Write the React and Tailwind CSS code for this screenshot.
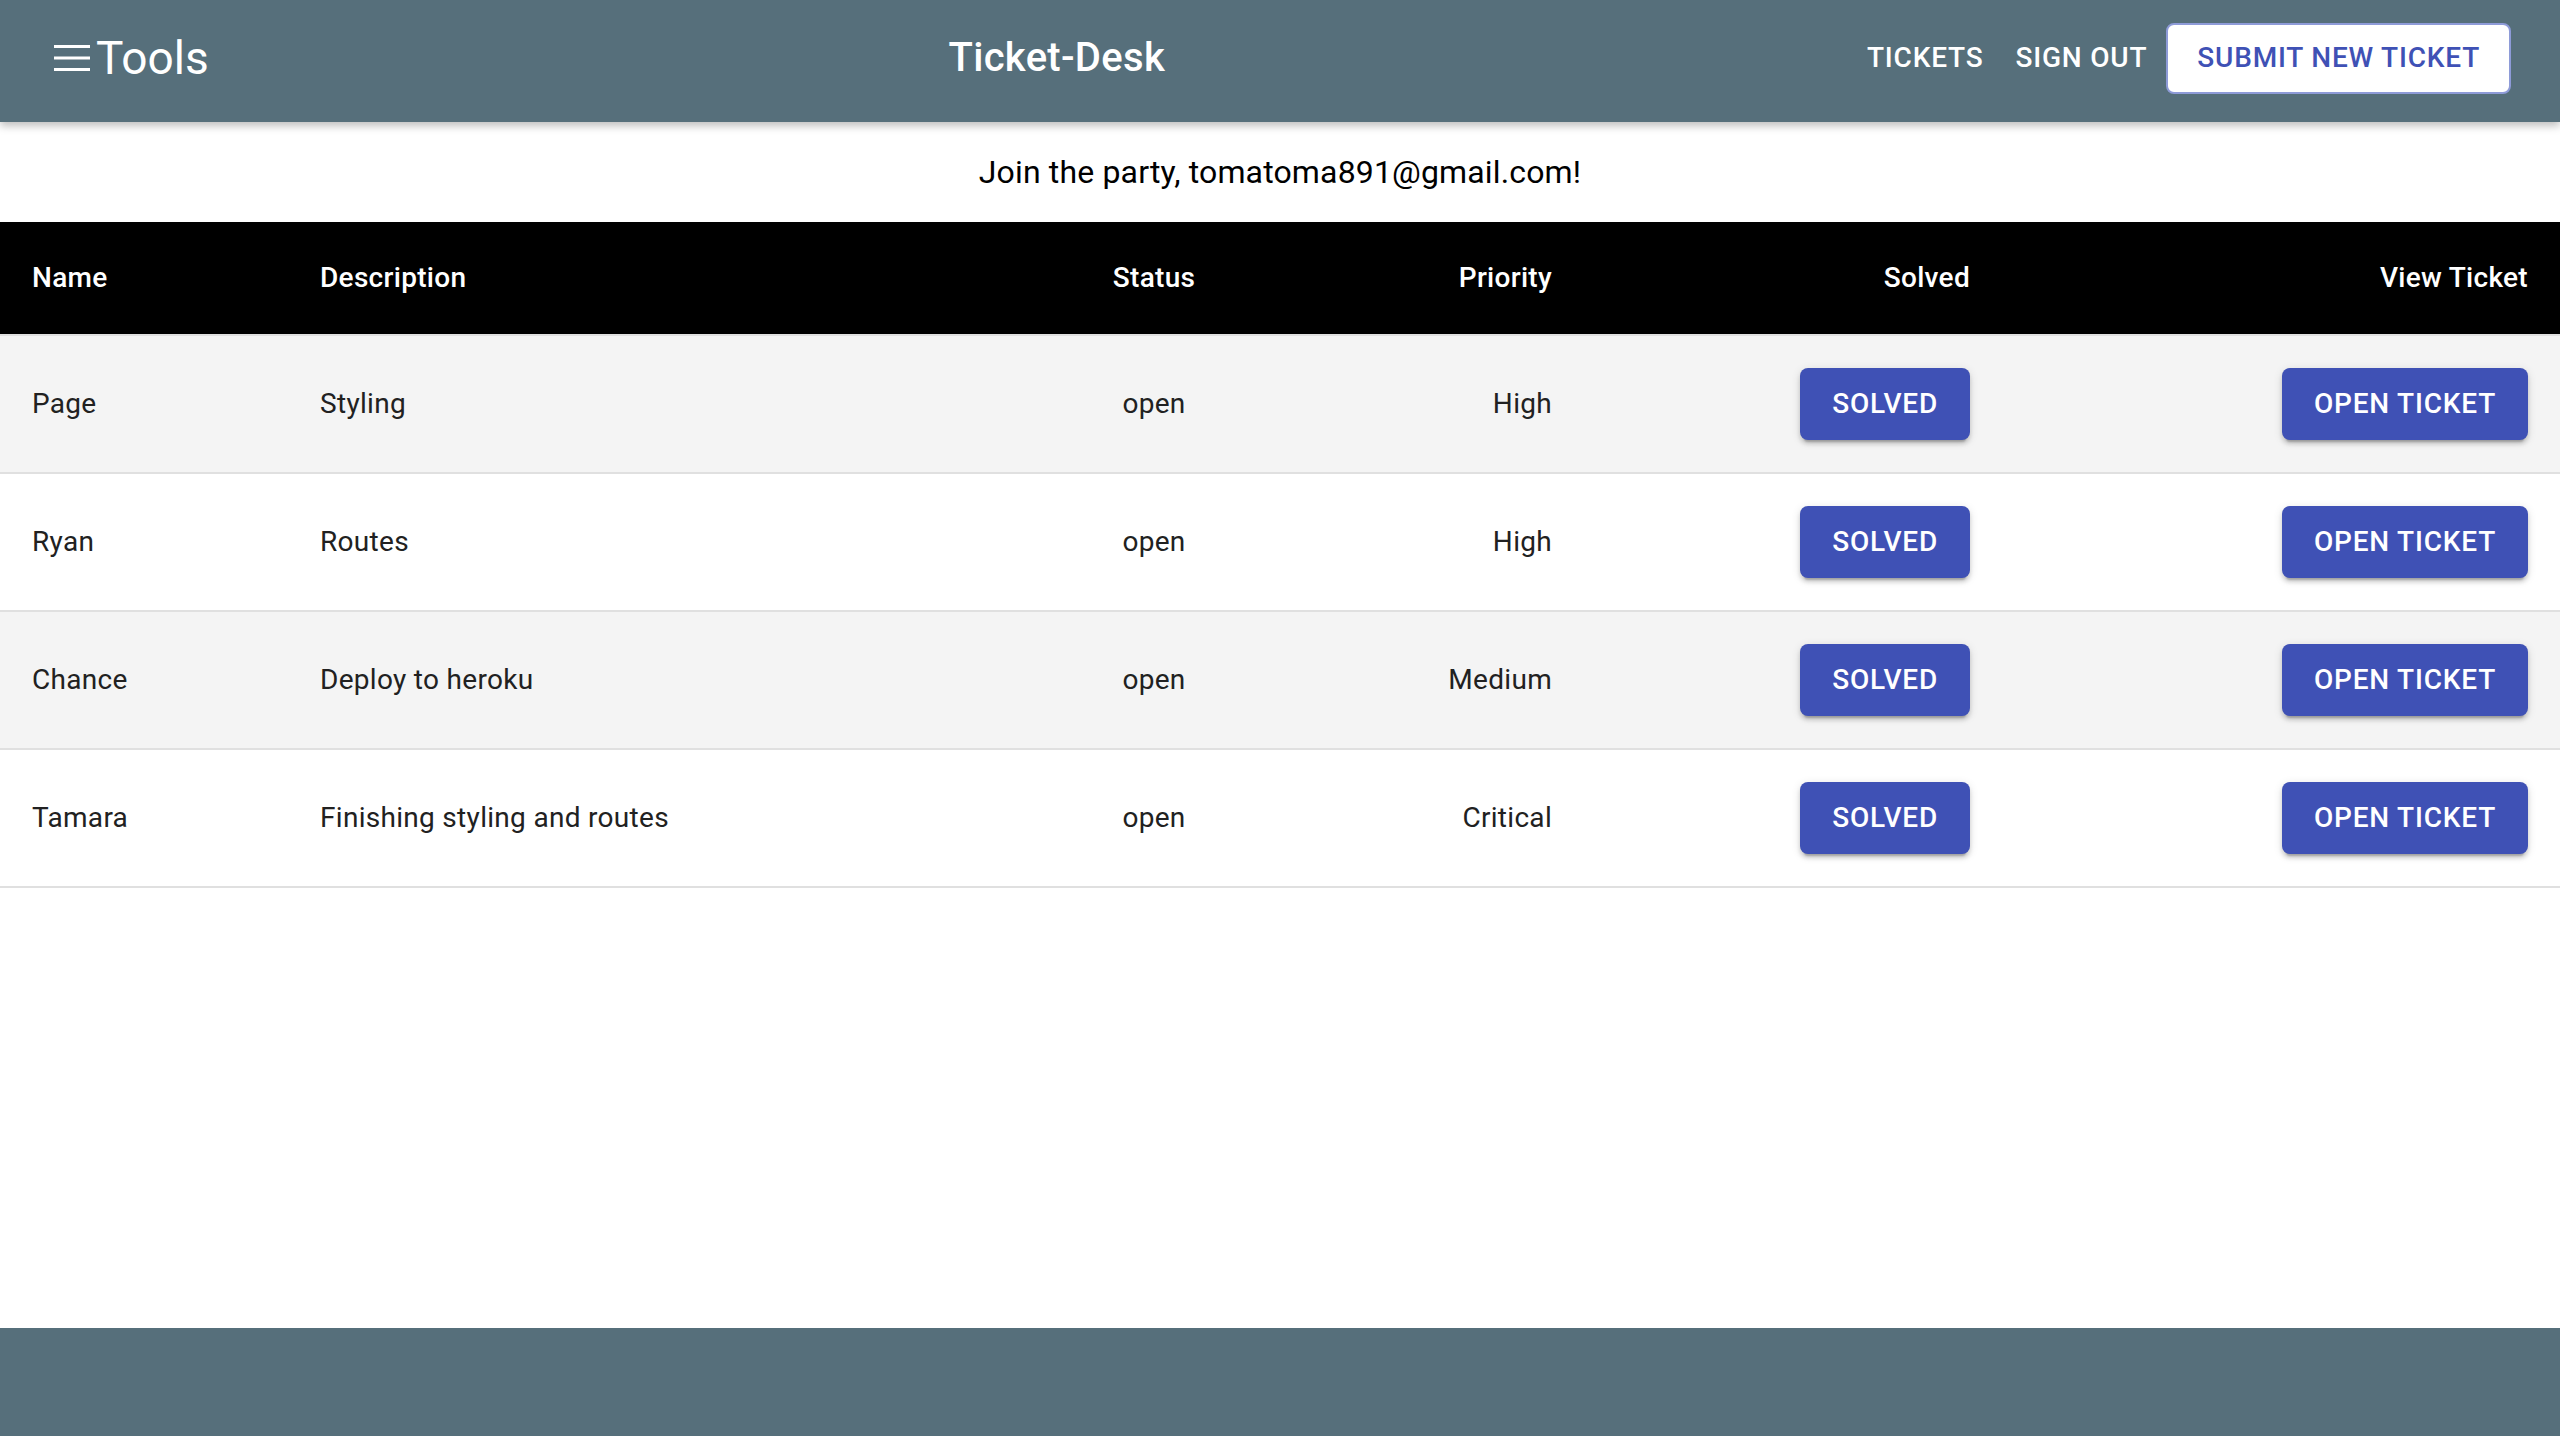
import React from 'react';

const TICKETS = [
  { name: 'Page', description: 'Styling', status: 'open', priority: 'High' },
  { name: 'Ryan', description: 'Routes', status: 'open', priority: 'High' },
  { name: 'Chance', description: 'Deploy to heroku', status: 'open', priority: 'Medium' },
  { name: 'Tamara', description: 'Finishing styling and routes', status: 'open', priority: 'Critical' },
];

const font = { fontFamily: 'Roboto, "Liberation Sans", sans-serif' };

function MenuIcon() {
  return (
    <svg width="36" height="26" viewBox="0 0 36 26" className="block">
      <rect x="0" y="0" width="36" height="3" fill="white" />
      <rect x="0" y="11.5" width="36" height="3" fill="white" />
      <rect x="0" y="23" width="36" height="3" fill="white" />
    </svg>
  );
}

function ContainedButton({ children }) {
  return (
    <button className="h-[72px] px-8 rounded-lg bg-[#3f51b5] text-white text-[28px] font-medium uppercase tracking-[0.8px] shadow-[0_6px_2px_-4px_rgba(0,0,0,0.2),0_4px_4px_0_rgba(0,0,0,0.14),0_2px_10px_0_rgba(0,0,0,0.12)]">
      {children}
    </button>
  );
}

export default function App() {
  return (
    <div className="min-h-screen flex flex-col bg-white" style={font}>
      {/* App bar */}
      <header className="relative z-10 h-[122px] bg-[#566f7b] flex items-center pb-[6px] pl-[54px] pr-[49px] shadow-[0_4px_8px_rgba(0,0,0,0.25)]">
        <div className="flex items-center">
          <MenuIcon />
          <span className="ml-[6px] text-[46px] text-white font-normal leading-none">Tools</span>
        </div>
        <div className="flex-1 text-center pl-[54px] text-[40px] font-medium tracking-[0.3px] text-white">Ticket-Desk</div>
        <nav className="flex items-center">
          <button className="h-[71px] px-4 text-[28px] font-medium uppercase tracking-[0.8px] text-white">Tickets</button>
          <button className="h-[71px] px-4 text-[28px] font-medium uppercase tracking-[0.8px] text-white">Sign Out</button>
          <button className="ml-[3px] h-[71px] px-[29px] bg-white border-2 border-[#8e9bd8] rounded-lg text-[28px] font-medium uppercase tracking-[0.8px] text-[#3f51b5]">
            Submit New Ticket
          </button>
        </nav>
      </header>

      <main className="flex-1">
        <div className="h-[100px] flex items-center justify-center text-[32px] tracking-[0.15px] text-black">
          Join the party, tomatoma891@gmail.com!
        </div>

        <table className="w-full table-fixed border-collapse tracking-[0.3px]">
          <colgroup>
            <col className="w-[288px]" />
            <col className="w-[760px]" />
            <col className="w-[212px]" />
            <col className="w-[324px]" />
            <col className="w-[418px]" />
            <col className="w-[558px]" />
          </colgroup>
          <thead>
            <tr className="bg-black text-white text-[28px] font-medium">
              <th className="px-8 py-8 leading-[48px] text-left font-medium border-b-2 border-[#e0e0e0]">Name</th>
              <th className="px-8 py-8 leading-[48px] text-left font-medium border-b-2 border-[#e0e0e0]">Description</th>
              <th className="px-8 py-8 leading-[48px] text-center font-medium border-b-2 border-[#e0e0e0]">Status</th>
              <th className="px-8 py-8 leading-[48px] text-right font-medium border-b-2 border-[#e0e0e0]">Priority</th>
              <th className="px-8 py-8 leading-[48px] text-right font-medium border-b-2 border-[#e0e0e0]">Solved</th>
              <th className="px-8 py-8 leading-[48px] text-right font-medium border-b-2 border-[#e0e0e0]">View Ticket</th>
            </tr>
          </thead>
          <tbody className="text-[28px] text-[#212121]">
            {TICKETS.map((t, i) => (
              <tr key={t.name} className={i % 2 === 0 ? 'bg-[#f4f4f4]' : 'bg-white'}>
                <td className="px-8 py-8 text-left border-b-2 border-[#e0e0e0]">{t.name}</td>
                <td className="px-8 py-8 text-left border-b-2 border-[#e0e0e0]">{t.description}</td>
                <td className="px-8 py-8 text-center border-b-2 border-[#e0e0e0]">{t.status}</td>
                <td className="px-8 py-8 text-right border-b-2 border-[#e0e0e0]">{t.priority}</td>
                <td className="px-8 py-8 text-right border-b-2 border-[#e0e0e0]">
                  <ContainedButton>Solved</ContainedButton>
                </td>
                <td className="px-8 py-8 text-right border-b-2 border-[#e0e0e0]">
                  <ContainedButton>Open Ticket</ContainedButton>
                </td>
              </tr>
            ))}
          </tbody>
        </table>
      </main>

      <footer className="h-[108px] bg-[#566f7b]" />
    </div>
  );
}
